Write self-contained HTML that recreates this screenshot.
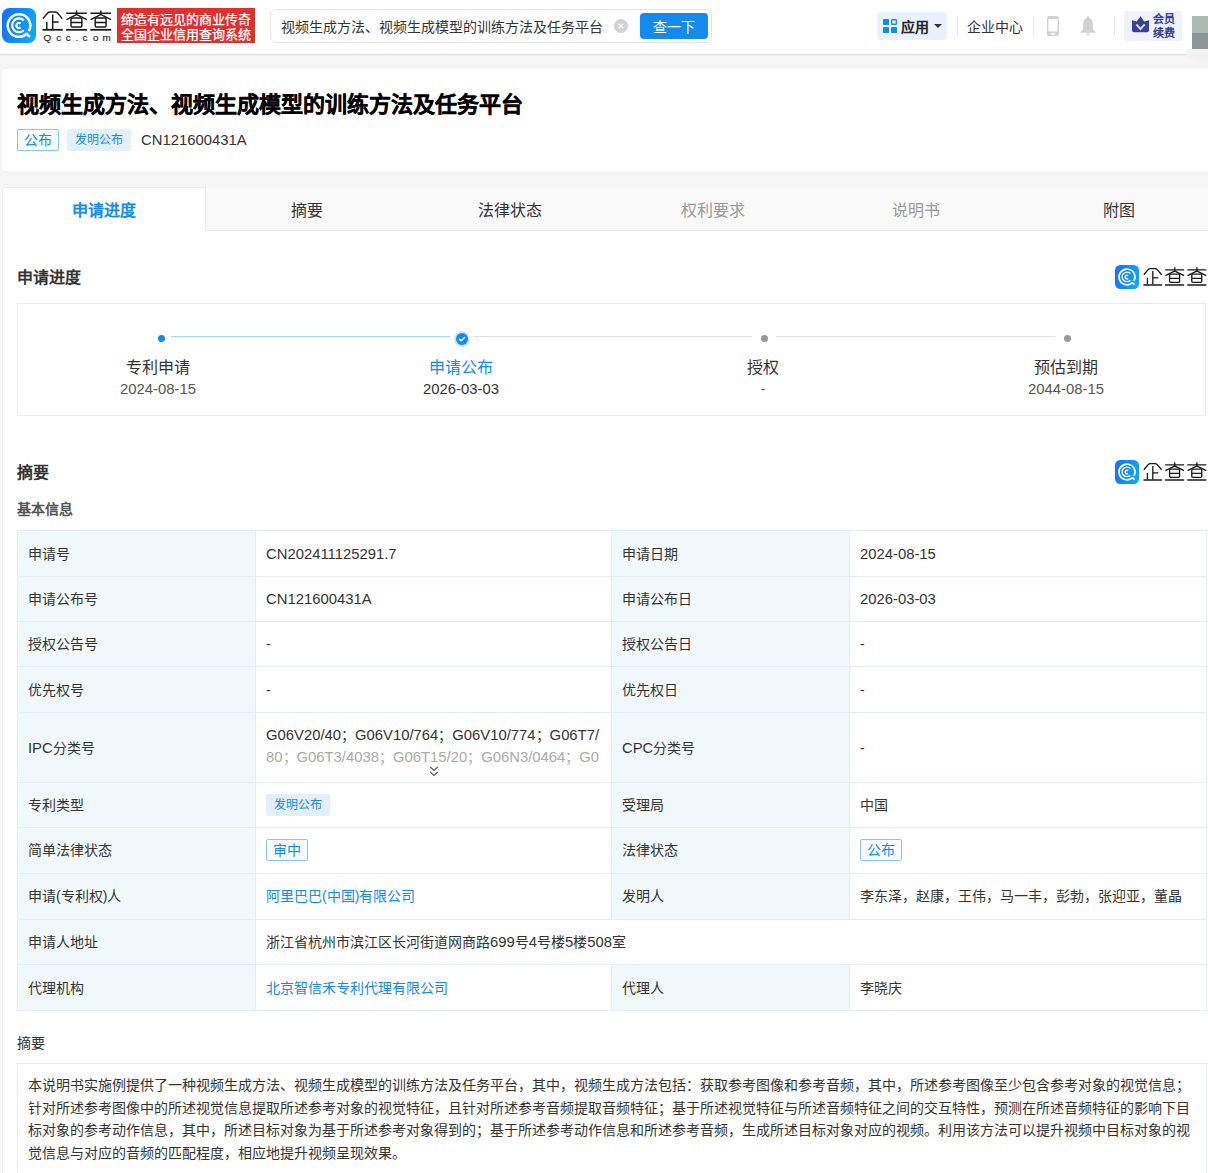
<!DOCTYPE html>
<html lang="zh-CN"><head><meta charset="utf-8">
<style>
*{margin:0;padding:0;box-sizing:border-box}
html,body{width:1208px;height:1173px;overflow:hidden}
body{background:#f6f6f6;font-family:"Liberation Sans",sans-serif;color:#333;position:relative}
.a{position:absolute;white-space:nowrap}
#hdr{position:absolute;left:0;top:0;width:1208px;height:54px;background:#fff;box-shadow:0 1px 0 #dedede,0 2px 0 #efefef}
.card{position:absolute;background:#fff;border-radius:3px}
.blue{color:#128bed}

.tagb{top:129px;height:22px;border:1px solid #8cc6f7;background:#f5faff;color:#128bed;font-size:14px;line-height:20px;text-align:center;border-radius:2px}
.tagf{height:22px;background:#e2effd;color:#128bed;font-size:12px;line-height:22px;text-align:center;border-radius:2px}
.tab{top:189px;width:203px;height:44px;line-height:44px;text-align:center;font-size:16px;color:#333}
.h2{font-size:16px;font-weight:bold;color:#333;line-height:22px}
.st{top:358px;width:200px;text-align:center;font-size:16px;line-height:20px;color:#333}
.sd{top:380px;width:200px;text-align:center;font-size:14px;line-height:18px}
.td{font-size:14px;line-height:20px;color:#333}
.abs{font-size:14px;line-height:22.5px;color:#333}
.l{font-size:1.06em}
</style></head><body>
<div id="hdr">
  <svg class="a" style="left:2px;top:8px" width="34" height="35" viewBox="0 0 34 35">
    <defs><linearGradient id="lg" x1="0" y1="0" x2="1" y2="0.3"><stop offset="0" stop-color="#1a6cf4"/><stop offset="1" stop-color="#0aa5fa"/></linearGradient>
    <symbol id="qi" viewBox="0 0 34 35">
    <path d="M24.7 25.76 A11.3 11.3 0 1 1 26.79 23.15" stroke="#fff" stroke-width="2.5" fill="none"/>
    <path d="M24.2 25.2 L27.9 29" stroke="#fff" stroke-width="2.5" fill="none"/>
    <path d="M21.79 22.26 A6.9 6.9 0 1 1 21.79 12.34" stroke="#fff" stroke-width="2.2" fill="none"/>
    <path d="M18.6 19.42 A2.5 2.5 0 1 1 18.6 15.58" stroke="#fff" stroke-width="2.2" fill="none"/>
    </symbol></defs>
    <rect x="0" y="0" width="34" height="35" rx="7.5" fill="url(#lg)"/>
    <use href="#qi" x="0" y="0" width="34" height="35"/>
  </svg>
  <svg class="a" style="left:40px;top:8px" width="76" height="36" viewBox="0 0 76 36">
    <defs><symbol id="qt" viewBox="0 0 76 24">
    <g stroke="#1a1a1a" stroke-width="1.45" fill="none" stroke-linecap="butt" stroke-linejoin="round">
      <path d="M2.9 10.6 L7.6 5 Q8.6 3.9 10 3.9 L15 3.9 Q16.5 3.9 17.5 5 L22.3 10.6"/>
      <path d="M12.7 6.5 V21.2 M12.7 14 H18.7 M6.8 14 V21.2"/>
      <path d="M2.5 21.8 H22.8" stroke-width="1.8"/>
      <path d="M26.2 5.3 H46.8 M36.6 2.4 V7.5 M36.4 6.6 L26.4 11.6 M36.8 6.6 L46.8 11.6"/>
      <path d="M32 10 H40.9 Q41.9 10 41.9 11.2 V17.7 Q41.9 18.9 40.7 18.9 H32.2 Q31 18.9 31 17.7 V11.2 Q31 10 32.2 10 Z M31 14.5 H41.9"/>
      <path d="M26.1 21.8 H46.9" stroke-width="1.8"/>
      <path d="M50.4 5.3 H71 M60.8 2.4 V7.5 M60.6 6.6 L50.6 11.6 M61 6.6 L71 11.6"/>
      <path d="M56.2 10 H65.1 Q66.1 10 66.1 11.2 V17.7 Q66.1 18.9 64.9 18.9 H56.4 Q55.2 18.9 55.2 17.7 V11.2 Q55.2 10 56.4 10 Z M55.2 14.5 H66.1"/>
      <path d="M50.3 21.8 H71.2" stroke-width="1.8"/>
    </g></symbol></defs>
    <use href="#qt" x="0" y="0" width="76" height="24"/>
    <g fill="#1a1a1a" font-family="Liberation Sans" font-size="9.8" stroke="#1a1a1a" stroke-width="0.15">
      <text x="3.5" y="32.6">Q</text><text x="16.2" y="32.6">c</text><text x="25.8" y="32.6">c</text><text x="35.6" y="32.6">.</text><text x="42.5" y="32.6">c</text><text x="53" y="32.6">o</text><text x="62.5" y="32.6">m</text>
    </g>
  </svg>
  <div class="a" style="left:117px;top:8px;width:138px;height:35px;background:#e0302e;color:#fff;font-size:13px;line-height:15px;padding:3.5px 0 0 4px;-webkit-text-stroke:0.25px #fff">缔造有远见的商业传奇<br>全国企业信用查询系统</div>
  <div class="a" style="left:270px;top:9px;width:442px;height:34px;border:1px solid #e3e3e3;border-radius:6px"></div>
  <div class="a" style="left:281px;top:18px;font-size:14px;color:#333;line-height:18px">视频生成方法、视频生成模型的训练方法及任务平台</div>
  <svg class="a" style="left:614px;top:19px" width="14" height="14" viewBox="0 0 14 14"><circle cx="7" cy="7" r="7" fill="#d2d2d2"/><path d="M4.8 4.8 L9.2 9.2 M9.2 4.8 L4.8 9.2" stroke="#fff" stroke-width="1.3"/></svg>
  <div class="a" style="left:640px;top:13px;width:68px;height:26px;border-radius:4px;background:#128bed;color:#fff;font-size:14px;line-height:28px;text-align:center">查一下</div>
  <div class="a" style="left:877px;top:12px;width:70px;height:28px;border-radius:4px;background:#e8f1fd"></div>
  <svg class="a" style="left:883px;top:19px" width="14" height="14" viewBox="0 0 14 14"><g fill="#128bed"><rect x="0" y="0" width="6" height="6" rx="0.8"/><rect x="0" y="8" width="6" height="6" rx="0.8"/><rect x="8" y="8" width="6" height="6" rx="0.8"/></g><rect x="8.7" y="0.7" width="4.6" height="4.6" rx="0.5" fill="#fff" stroke="#128bed" stroke-width="1.4"/></svg>
  <div class="a" style="left:901px;top:17px;font-size:14px;font-weight:bold;line-height:20px;color:#222">应用</div>
  <svg class="a" style="left:934px;top:24px" width="8" height="4" viewBox="0 0 8 4"><path d="M0 0 H8 L4 4 Z" fill="#333"/></svg>
  <div class="a" style="left:957px;top:16px;width:1px;height:19px;background:#e5e5e5"></div>
  <div class="a" style="left:967px;top:17px;font-size:14px;line-height:20px;color:#333">企业中心</div>
  <div class="a" style="left:1033px;top:16px;width:1px;height:19px;background:#e5e5e5"></div>
  <svg class="a" style="left:1047px;top:16px" width="12" height="20" viewBox="0 0 12 20"><path d="M2.5 0 H9.5 Q12 0 12 2.5 V17.5 Q12 20 9.5 20 H2.5 Q0 20 0 17.5 V2.5 Q0 0 2.5 0 Z M1.4 3 V15.4 H10.6 V3 Z M4 17 V18.4 H8 V17 Z" fill="#d0d0d0" fill-rule="evenodd"/></svg>
  <svg class="a" style="left:1080px;top:16px" width="16" height="20" viewBox="0 0 16 20"><path d="M7.2 0.3 H8.8 L9 2 Q12.6 3 12.8 7.5 V13.5 L16 16.7 H0 L3.2 13.5 V7.5 Q3.4 3 7 2 Z" fill="#d0d0d0"/><path d="M6 17.8 H10 Q9.6 19.7 8 19.7 Q6.4 19.7 6 17.8 Z" fill="#d0d0d0"/></svg>
  <div class="a" style="left:1114px;top:16px;width:1px;height:19px;background:#e5e5e5"></div>
  <div class="a" style="left:1124px;top:11px;width:58px;height:30px;border-radius:3px;background:#f1f1fd"></div>
  <svg class="a" style="left:1132px;top:16px" width="18" height="17" viewBox="0 0 18 17"><path d="M0 4.2 L4.8 5.6 L8.5 0.2 L12.2 5.6 L17 4.2 V14.4 Q17 16.2 15 16.2 H2 Q0 16.2 0 14.4 Z" fill="#35419b"/><path d="M4.3 8.4 L8.5 13 L12.7 8.4" stroke="#f7d29a" stroke-width="2" fill="none"/></svg>
  <div class="a" style="left:1153px;top:12px;font-size:11px;font-weight:bold;line-height:14px;color:#35419b">会员<br>续费</div>
  <div class="a" style="left:1192px;top:16px;width:16px;height:17px;background:#a8bab2"></div>
  <div class="a" style="left:1192px;top:33px;width:16px;height:16px;background:#8c9696"></div>
  <div class="a" style="left:1186px;top:49px;width:22px;height:13px;background:#f2f2f2;border-radius:0 0 0 14px / 0 0 0 10px"></div>
</div>

<div class="card" style="left:2px;top:69px;width:1220px;height:102px;border-radius:4px"></div>
<div class="a" style="left:17px;top:91px;font-size:22px;font-weight:bold;color:#000;line-height:28px;-webkit-text-stroke:0.3px #000">视频生成方法、视频生成模型的训练方法及任务平台</div>
<div class="a tagb" style="left:17px;top:129px;width:42px">公布</div>
<div class="a tagf" style="left:67px;top:129px;width:64px">发明公布</div>
<div class="a" style="left:141px;top:131px;font-size:14px;line-height:18px;color:#333"><span class="l">CN121600431A</span></div>

<div class="card" style="left:2px;top:187px;width:1220px;height:1000px;border-radius:4px 4px 0 0;border:1px solid #ededed"></div>
<div class="a" style="left:205px;top:187px;width:1010px;height:44px;background:#f9f9f9;border-left:1px solid #eaeaea;border-bottom:1px solid #eaeaea"></div>
<div class="a tab" style="left:2px;color:#128bed;font-weight:bold">申请进度</div>
<div class="a tab" style="left:205px">摘要</div>
<div class="a tab" style="left:408px">法律状态</div>
<div class="a tab" style="left:611px;color:#999">权利要求</div>
<div class="a tab" style="left:814px;color:#999">说明书</div>
<div class="a tab" style="left:1017px">附图</div>

<svg class="a" style="left:1115px;top:265px" width="24" height="24" viewBox="0 0 34 35" preserveAspectRatio="none"><rect x="0" y="0" width="34" height="35" rx="7.5" fill="url(#lg)"/><use href="#qi" x="0" y="0" width="34" height="35"/></svg>
<svg class="a" style="left:1140.5px;top:265px" width="70" height="22" viewBox="0 0 76 24"><use href="#qt" x="0" y="0" width="76" height="24"/></svg>
<svg class="a" style="left:1115px;top:460px" width="24" height="24" viewBox="0 0 34 35" preserveAspectRatio="none"><rect x="0" y="0" width="34" height="35" rx="7.5" fill="url(#lg)"/><use href="#qi" x="0" y="0" width="34" height="35"/></svg>
<svg class="a" style="left:1140.5px;top:460px" width="70" height="22" viewBox="0 0 76 24"><use href="#qt" x="0" y="0" width="76" height="24"/></svg>
<div class="a h2" style="left:17px;top:267px">申请进度</div>
<div class="a" style="left:17px;top:303px;width:1189px;height:113px;border:1px solid #ececec"></div>
<div class="a" style="left:171px;top:336px;width:279px;height:1px;background:#a9d3f6"></div>
<div class="a" style="left:474px;top:336px;width:278px;height:1px;background:#e0e0e0"></div>
<div class="a" style="left:776px;top:336px;width:279px;height:1px;background:#e0e0e0"></div>
<div class="a" style="left:158px;top:335px;width:7px;height:7px;border-radius:50%;background:#128bed"></div>
<div class="a" style="left:454px;top:331px;width:16px;height:16px;border-radius:50%;background:#cfe6fb"></div>
<div class="a" style="left:456px;top:333px;width:12px;height:12px;border-radius:50%;background:#128bed"></div>
<svg class="a" style="left:456px;top:333px" width="12" height="12" viewBox="0 0 12 12"><path d="M3.4 6.2 L5.2 7.8 L8.6 4.6" stroke="#fff" stroke-width="1.4" fill="none" stroke-linecap="round" stroke-linejoin="round"/></svg>
<div class="a" style="left:761px;top:335px;width:7px;height:7px;border-radius:50%;background:#999"></div>
<div class="a" style="left:1064px;top:335px;width:7px;height:7px;border-radius:50%;background:#999"></div>
<div class="a st" style="left:58px">专利申请</div><div class="a sd" style="left:58px;color:#555"><span class="l">2024-08-15</span></div>
<div class="a st" style="left:361px;color:#128bed">申请公布</div><div class="a sd" style="left:361px;color:#333"><span class="l">2026-03-03</span></div>
<div class="a st" style="left:663px">授权</div><div class="a sd" style="left:663px;color:#555">-</div>
<div class="a st" style="left:966px">预估到期</div><div class="a sd" style="left:966px;color:#555"><span class="l">2044-08-15</span></div>

<div class="a h2" style="left:17px;top:462px">摘要</div>
<div class="a" style="left:17px;top:500px;font-size:14px;font-weight:bold;color:#555;line-height:18px">基本信息</div>
<div class="a" style="left:17px;top:530px;width:1190px;height:481px;background:#e4edf6"></div>
<div class="a" style="left:18px;top:531px;width:237px;height:45px;background:#f1f8fc"></div>
<div class="a" style="left:256px;top:531px;width:355px;height:45px;background:#fff"></div>
<div class="a" style="left:612px;top:531px;width:237px;height:45px;background:#f1f8fc"></div>
<div class="a" style="left:850px;top:531px;width:356px;height:45px;background:#fff"></div>
<div class="a td" style="left:28px;top:544px">申请号</div>
<div class="a td" style="left:266px;top:544px"><span class="l">CN202411125291.7</span></div>
<div class="a td" style="left:622px;top:544px">申请日期</div>
<div class="a td" style="left:860px;top:544px"><span class="l">2024-08-15</span></div>
<div class="a" style="left:18px;top:577px;width:237px;height:44px;background:#f1f8fc"></div>
<div class="a" style="left:256px;top:577px;width:355px;height:44px;background:#fff"></div>
<div class="a" style="left:612px;top:577px;width:237px;height:44px;background:#f1f8fc"></div>
<div class="a" style="left:850px;top:577px;width:356px;height:44px;background:#fff"></div>
<div class="a td" style="left:28px;top:589px">申请公布号</div>
<div class="a td" style="left:266px;top:589px"><span class="l">CN121600431A</span></div>
<div class="a td" style="left:622px;top:589px">申请公布日</div>
<div class="a td" style="left:860px;top:589px"><span class="l">2026-03-03</span></div>
<div class="a" style="left:18px;top:622px;width:237px;height:44px;background:#f1f8fc"></div>
<div class="a" style="left:256px;top:622px;width:355px;height:44px;background:#fff"></div>
<div class="a" style="left:612px;top:622px;width:237px;height:44px;background:#f1f8fc"></div>
<div class="a" style="left:850px;top:622px;width:356px;height:44px;background:#fff"></div>
<div class="a td" style="left:28px;top:634px">授权公告号</div>
<div class="a td" style="left:266px;top:634px">-</div>
<div class="a td" style="left:622px;top:634px">授权公告日</div>
<div class="a td" style="left:860px;top:634px">-</div>
<div class="a" style="left:18px;top:667px;width:237px;height:45px;background:#f1f8fc"></div>
<div class="a" style="left:256px;top:667px;width:355px;height:45px;background:#fff"></div>
<div class="a" style="left:612px;top:667px;width:237px;height:45px;background:#f1f8fc"></div>
<div class="a" style="left:850px;top:667px;width:356px;height:45px;background:#fff"></div>
<div class="a td" style="left:28px;top:680px">优先权号</div>
<div class="a td" style="left:266px;top:680px">-</div>
<div class="a td" style="left:622px;top:680px">优先权日</div>
<div class="a td" style="left:860px;top:680px">-</div>
<div class="a" style="left:18px;top:713px;width:237px;height:69px;background:#f1f8fc"></div>
<div class="a" style="left:256px;top:713px;width:355px;height:69px;background:#fff"></div>
<div class="a" style="left:612px;top:713px;width:237px;height:69px;background:#f1f8fc"></div>
<div class="a" style="left:850px;top:713px;width:356px;height:69px;background:#fff"></div>
<div class="a td" style="left:28px;top:738px"><span class="l">IPC</span>分类号</div>
<div class="a td" style="left:266px;top:724px;line-height:22px"><span class="l">G06V20/40</span>；<span class="l">G06V10/764</span>；<span class="l">G06V10/774</span>；<span class="l">G06T7/</span></div>
<div class="a td" style="left:266px;top:746px;line-height:22px;color:#aaa"><span class="l">80</span>；<span class="l">G06T3/4038</span>；<span class="l">G06T15/20</span>；<span class="l">G06N3/0464</span>；<span class="l">G0</span></div>
<svg class="a" style="left:429px;top:766px" width="10" height="11" viewBox="0 0 10 11"><path d="M1.2 1 L5 4.5 L8.8 1 M1.2 6 L5 9.5 L8.8 6" stroke="#555" stroke-width="1.2" fill="none"/></svg>
<div class="a td" style="left:622px;top:738px"><span class="l">CPC</span>分类号</div>
<div class="a td" style="left:860px;top:738px">-</div>
<div class="a" style="left:18px;top:783px;width:237px;height:44px;background:#f1f8fc"></div>
<div class="a" style="left:256px;top:783px;width:355px;height:44px;background:#fff"></div>
<div class="a" style="left:612px;top:783px;width:237px;height:44px;background:#f1f8fc"></div>
<div class="a" style="left:850px;top:783px;width:356px;height:44px;background:#fff"></div>
<div class="a td" style="left:28px;top:795px">专利类型</div>
<div class="a tagf" style="left:266px;top:794px;width:64px">发明公布</div>
<div class="a td" style="left:622px;top:795px">受理局</div>
<div class="a td" style="left:860px;top:795px">中国</div>
<div class="a" style="left:18px;top:828px;width:237px;height:45px;background:#f1f8fc"></div>
<div class="a" style="left:256px;top:828px;width:355px;height:45px;background:#fff"></div>
<div class="a" style="left:612px;top:828px;width:237px;height:45px;background:#f1f8fc"></div>
<div class="a" style="left:850px;top:828px;width:356px;height:45px;background:#fff"></div>
<div class="a td" style="left:28px;top:840px">简单法律状态</div>
<div class="a tagb" style="left:266px;top:839px;width:42px">审中</div>
<div class="a td" style="left:622px;top:840px">法律状态</div>
<div class="a tagb" style="left:860px;top:839px;width:42px">公布</div>
<div class="a" style="left:18px;top:874px;width:237px;height:45px;background:#f1f8fc"></div>
<div class="a" style="left:256px;top:874px;width:355px;height:45px;background:#fff"></div>
<div class="a" style="left:612px;top:874px;width:237px;height:45px;background:#f1f8fc"></div>
<div class="a" style="left:850px;top:874px;width:356px;height:45px;background:#fff"></div>
<div class="a td" style="left:28px;top:886px">申请(专利权)人</div>
<div class="a td" style="left:266px;top:886px;color:#128bed">阿里巴巴(中国)有限公司</div>
<div class="a td" style="left:622px;top:886px">发明人</div>
<div class="a td" style="left:860px;top:886px">李东泽，赵康，王伟，马一丰，彭勃，张迎亚，董晶</div>
<div class="a" style="left:18px;top:920px;width:237px;height:44px;background:#f1f8fc"></div>
<div class="a" style="left:256px;top:920px;width:950px;height:44px;background:#fff"></div>
<div class="a td" style="left:28px;top:932px">申请人地址</div>
<div class="a td" style="left:266px;top:932px">浙江省杭州市滨江区长河街道网商路<span class="l">699</span>号<span class="l">4</span>号楼<span class="l">5</span>楼<span class="l">508</span>室</div>
<div class="a" style="left:18px;top:965px;width:237px;height:45px;background:#f1f8fc"></div>
<div class="a" style="left:256px;top:965px;width:355px;height:45px;background:#fff"></div>
<div class="a" style="left:612px;top:965px;width:237px;height:45px;background:#f1f8fc"></div>
<div class="a" style="left:850px;top:965px;width:356px;height:45px;background:#fff"></div>
<div class="a td" style="left:28px;top:978px">代理机构</div>
<div class="a td" style="left:266px;top:978px;color:#128bed">北京智信禾专利代理有限公司</div>
<div class="a td" style="left:622px;top:978px">代理人</div>
<div class="a td" style="left:860px;top:978px">李晓庆</div>
<div class="a" style="left:17px;top:1034px;font-size:14px;color:#333;line-height:18px">摘要</div>
<div class="a" style="left:17px;top:1063px;width:1190px;height:200px;border:1px solid #e4edf6;background:#fff"></div>
<div class="a abs" style="left:28px;top:1074px">本说明书实施例提供了一种视频生成方法、视频生成模型的训练方法及任务平台，其中，视频生成方法包括：获取参考图像和参考音频，其中，所述参考图像至少包含参考对象的视觉信息；<br>针对所述参考图像中的所述视觉信息提取所述参考对象的视觉特征，且针对所述参考音频提取音频特征；基于所述视觉特征与所述音频特征之间的交互特性，预测在所述音频特征的影响下目<br>标对象的参考动作信息，其中，所述目标对象为基于所述参考对象得到的；基于所述参考动作信息和所述参考音频，生成所述目标对象对应的视频。利用该方法可以提升视频中目标对象的视<br>觉信息与对应的音频的匹配程度，相应地提升视频呈现效果。</div>
</body></html>
